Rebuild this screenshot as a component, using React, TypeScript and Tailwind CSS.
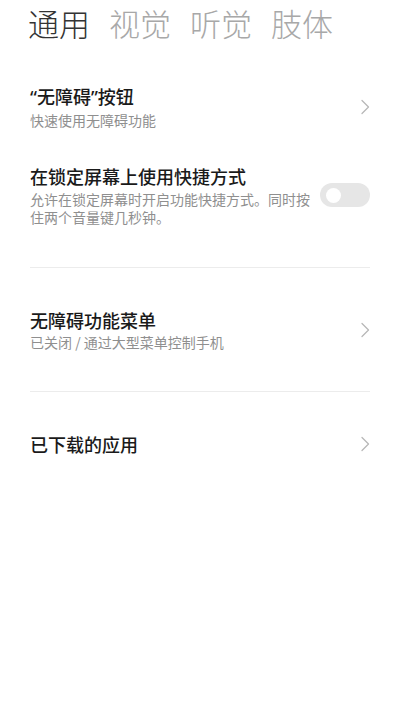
const font = {
  fontFamily: '"Noto Sans CJK SC", "Noto Sans", sans-serif',
};

// latin quotes are narrow in the reference, not full-width
const quote = { fontFamily: '"Noto Sans", "Liberation Sans", sans-serif' };

function Chevron() {
  return (
    <svg width="10" height="16" viewBox="0 0 10 16" className="shrink-0">
      <path
        d="M2 1.5 L8.5 8 L2 14.5"
        fill="none"
        stroke="#b8b8b8"
        strokeWidth="1.3"
        strokeLinecap="round"
        strokeLinejoin="round"
      />
    </svg>
  );
}

function Toggle() {
  return (
    <div className="w-[50px] h-[24px] rounded-full bg-[#e6e6e6] flex items-center pl-[6px] shrink-0">
      <div className="w-[15px] h-[15px] rounded-full bg-white" />
    </div>
  );
}

const tabs = ["通用", "视觉", "听觉", "肢体"];

export default function App() {
  return (
    <div
      className="w-[400px] h-[711px] bg-white overflow-hidden"
      style={font}
    >
      <div className="flex gap-[19px] pl-[28px] pt-[7px]">
        {tabs.map((t, i) => (
          <span
            key={t}
            className={`text-[31px] leading-[32px] font-light ${
              i === 0 ? "text-[#333333]" : "text-[#a8a8a8]"
            }`}
          >
            {t}
          </span>
        ))}
      </div>

      <div className="px-[30px]">
        <div className="mt-[45px] flex items-center justify-between">
          <div>
            <div className="text-[18px] leading-[24px] font-medium text-[#1a1a1a]">
              <span style={quote}>“</span>无障碍<span style={quote}>”</span>按钮
            </div>
            <div className="mt-[2px] text-[14px] leading-[18px] text-[#8f8f8f]">
              快速使用无障碍功能
            </div>
          </div>
          <Chevron />
        </div>

        <div className="mt-[35px] flex items-center justify-between">
          <div className="w-[282px] shrink-0">
            <div className="text-[18px] leading-[24px] font-medium text-[#1a1a1a]">
              在锁定屏幕上使用快捷方式
            </div>
            <div className="mt-[2px] text-[14px] leading-[18px] text-[#8f8f8f]">
              允许在锁定屏幕时开启功能快捷方式。同时按住两个音量键几秒钟。
            </div>
          </div>
          <Toggle />
        </div>

        <div className="mt-[41px] h-px bg-[#ececec]" />

        <div className="mt-[40px] flex items-center justify-between">
          <div>
            <div className="text-[18px] leading-[24px] font-medium text-[#1a1a1a]">
              无障碍功能菜单
            </div>
            <div className="mt-[1px] text-[14px] leading-[18px] text-[#8f8f8f]">
              已关闭 / 通过大型菜单控制手机
            </div>
          </div>
          <Chevron />
        </div>

        <div className="mt-[40px] h-px bg-[#ececec]" />

        <div className="mt-[40px] flex items-center justify-between">
          <div className="text-[18px] leading-[24px] font-medium text-[#1a1a1a]">
            已下载的应用
          </div>
          <Chevron />
        </div>
      </div>
    </div>
  );
}
